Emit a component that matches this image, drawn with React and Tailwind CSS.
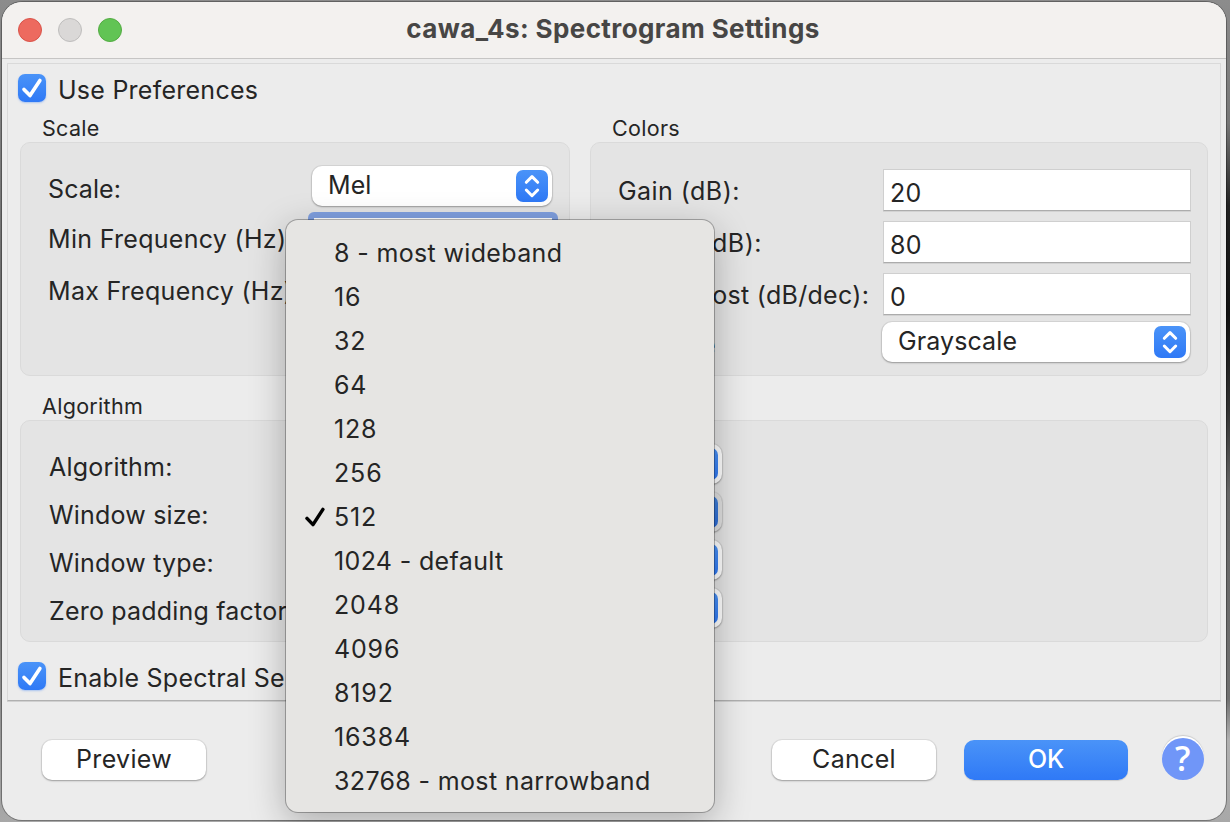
import React from "react";

const sizes = ["8 - most wideband", "16", "32", "64", "128", "256", "512", "1024 - default", "2048", "4096", "8192", "16384", "32768 - most narrowband"];

const settings = [
  { label: "Algorithm:" },
  { label: "Window size:", pressed: true },
  { label: "Window type:" },
  { label: "Zero padding factor" },
];

function Check({ className, strokeWidth }) {
  return (
    <svg viewBox="0 0 28 28" className={className} fill="none" stroke="currentColor" strokeLinecap="round" strokeLinejoin="round">
      <path d="M6 15.4L12 21.6L21.9 6.4" strokeWidth={strokeWidth} />
    </svg>
  );
}

function Checkbox({ label }) {
  return (
    <div className="flex h-7 items-center">
      <div className="h-7 w-7 shrink-0 rounded-[7px] bg-linear-to-b from-[#4a93f8] to-[#2f79f6] text-white shadow-[0_1px_2px_rgba(47,121,246,0.35)]">
        <Check className="h-7 w-7" strokeWidth="3.6" />
      </div>
      <span className="ml-3 whitespace-nowrap pt-1 text-[25px] leading-7 tracking-[0.25px]">{label}</span>
    </div>
  );
}

function Stepper() {
  return (
    <div className="h-8 w-8 shrink-0 rounded-[7px] bg-linear-to-b from-[#4a93f8] to-[#2f79f6]">
      <svg viewBox="0 0 32 32" className="h-8 w-8" fill="none" stroke="white" strokeWidth="3" strokeLinecap="round" strokeLinejoin="round">
        <path d="M10.3 12.3L16 6.6L21.7 12.3M10.3 20L16 25.7L21.7 20" />
      </svg>
    </div>
  );
}

function Select({ value, className }) {
  return (
    <div className={`flex h-10 items-center justify-between rounded-[10px] bg-white pl-4 pr-1 shadow-[0_0_0_1px_rgba(0,0,0,0.06),0_1px_2px_rgba(0,0,0,0.3)] ${className}`}>
      <span className="pb-[3px] text-[25px] leading-8 tracking-[0.1px]">{value}</span>
      <Stepper />
    </div>
  );
}

function Field({ value }) {
  return (
    <div className="mb-px h-[42px] w-[308px] border border-[#cfcfcf] border-b-[#acacac] bg-white pl-[6px] pt-[7px] text-[25px] leading-8 shadow-[0_1px_0_#d2d2d2]">{value}</div>
  );
}

function Legend({ children }) {
  return <div className="h-7 pl-[22px] text-[21.5px] leading-7">{children}</div>;
}

export default function App() {
  return (
    <div className="relative flex h-[822px] w-[1230px] overflow-hidden bg-[#8a8a8a] font-['Inter',sans-serif] text-[25px] tracking-[0.3px] text-[#252525]">
      <div className="w-[615px] bg-linear-to-b from-[#8c8c8c] via-[#5c5c5c] via-55% to-[#a8a8a8]" />
      <div className="w-[615px] bg-[linear-gradient(to_bottom,#8c8c8c_0%,#777_15%,#222_25%,#111_38%,#333_50%,#666_60%,#707070_85%,#b0b0b0_90%,#a8a8a8_100%)]" />
      <div className="-ml-[1228px] mt-[2px] flex h-[818px] w-[1224px] shrink-0 flex-col overflow-hidden rounded-[20px] bg-[#ececec] shadow-[0_0_0_1px_rgba(0,0,0,0.3)]">
        <div className="grid h-[57px] shrink-0 grid-cols-[1fr_auto_1fr] items-center border-b border-[#c6c5c4] bg-[#f3f1ef]">
          <div className="flex gap-4 pl-4">
            <div className="h-6 w-6 rounded-full border border-[#d95349] bg-[#ed6a5f]" />
            <div className="h-6 w-6 rounded-full border border-[#bebdbc] bg-[#dad8d7]" />
            <div className="h-6 w-6 rounded-full border border-[#53ab42] bg-[#61c454]" />
          </div>
          <div className="pb-[2px] pr-[2px] text-[26px] font-bold leading-8 tracking-[0.4px] text-[#474645]">cawa_4s: Spectrogram Settings</div>
          <div />
        </div>

        <div className="ml-[5px] mt-1 h-[638px] w-[1214px] shrink-0 border border-[#d9d9d9] border-b-[#b0b0b0] pl-[10px] pt-[10px] shadow-[0_1px_0_#d0d0d0]">
          <Checkbox label="Use Preferences" />

          <div className="ml-[2px] mt-3 flex gap-5">
            <div>
              <Legend>Scale</Legend>
              <div className="h-[234px] w-[550px] rounded-[10px] border border-[#dadada] bg-[#e4e4e4] pl-[27px] pt-[23px]">
                <div className="flex">
                  <div className="w-[264px] pt-[7px] leading-8 tracking-[0.1px]">Scale:</div>
                  <Select value="Mel" className="w-[240px]" />
                </div>
                <div className="mt-[6px] flex">
                  <div className="w-[260px] whitespace-nowrap pt-[11px] leading-8">Min Frequency (Hz)</div>
                  <div className="h-[50px] w-[250px] rounded-md border-[6px] border-[#7f9fdf] bg-white" />
                </div>
                <div className="mt-[2px] flex">
                  <div className="w-[263px] whitespace-nowrap pt-[11px] leading-8">Max Frequency (Hz)</div>
                </div>
              </div>
            </div>
            <div>
              <Legend>Colors</Legend>
              <div className="flex h-[234px] w-[618px] rounded-[10px] border border-[#dadada] bg-[#e4e4e4] pl-[27px] pt-[26px]">
                <div className="flex w-[265px] flex-col gap-5 whitespace-nowrap pt-[6px] leading-8">
                  <div className="tracking-[0.45px]">Gain (dB):</div>
                  <div className="tracking-[0.5px]">Range (dB):</div>
                  <div>High boost (dB/dec):</div>
                  <div className="-mt-[2px]">Scheme</div>
                </div>
                <div className="flex flex-col gap-[9px]">
                  <Field value="20" />
                  <Field value="80" />
                  <Field value="0" />
                  <Select value="Grayscale" className="-ml-px -mt-[3px] w-[308px]" />
                </div>
              </div>
            </div>
          </div>

          <div className="ml-[2px] mt-4">
            <Legend>Algorithm</Legend>
            <div className="flex h-[222px] w-[1188px] flex-col gap-2 rounded-[10px] border border-[#dadada] bg-[#e4e4e4] pl-7 pt-[23px]">
              {settings.map(({ label, pressed }) => (
                <div key={label} className="flex h-10">
                  <div className="w-[262px] whitespace-nowrap pt-[7px] leading-8 tracking-[0.2px]">{label}</div>
                  <Select value="" className={pressed ? "w-[411px] brightness-[0.88]" : "w-[411px]"} />
                </div>
              ))}
            </div>
          </div>

          <div className="mt-5">
            <Checkbox label="Enable Spectral Se" />
          </div>
        </div>

        <div className="mt-[39px] flex h-10 items-center pl-10">
          <div className="h-10 w-[164px] rounded-[10px] bg-white text-center leading-[38px] shadow-[0_0_0_1px_rgba(0,0,0,0.06),0_1px_2px_rgba(0,0,0,0.3)]">Preview</div>
          <div className="ml-[566px] h-10 w-[164px] rounded-[10px] bg-white text-center leading-[38px] shadow-[0_0_0_1px_rgba(0,0,0,0.06),0_1px_2px_rgba(0,0,0,0.3)]">Cancel</div>
          <div className="ml-7 h-10 w-[164px] rounded-[10px] bg-linear-to-b from-[#4a93f8] to-[#2f79f6] text-center font-medium leading-[38px] tracking-[-0.2px] text-white shadow-[0_1px_1px_rgba(0,0,0,0.15)]">OK</div>
          <div className="-mt-[2px] ml-[34px] h-[42px] w-[42px] rounded-full bg-[#7096f8] text-center font-['Open_Sans',sans-serif] text-[34px] font-semibold leading-[40px] text-white shadow-[0_-2px_0_white,0_-3px_1px_#ccc]">?</div>
        </div>
      </div>

      <div className="absolute left-[286px] top-[220px] h-[592px] w-[428px] rounded-xl bg-[#e6e5e3] py-[10px] shadow-[0_0_0_1px_rgba(0,0,0,0.28),0_10px_36px_rgba(0,0,0,0.28)]">
        {sizes.map((s) => (
          <div key={s} className="flex h-11 items-center pl-[15px]">
            <div className="w-[33px] text-black">{s === "512" && <Check className="mt-[2px] h-7 w-7" strokeWidth="3.5" />}</div>
            <span className={s.includes("-") ? "pt-[2px] leading-8 tracking-[0.35px]" : "pt-[2px] leading-8 tracking-[0.85px]"}>{s}</span>
          </div>
        ))}
      </div>
    </div>
  );
}
